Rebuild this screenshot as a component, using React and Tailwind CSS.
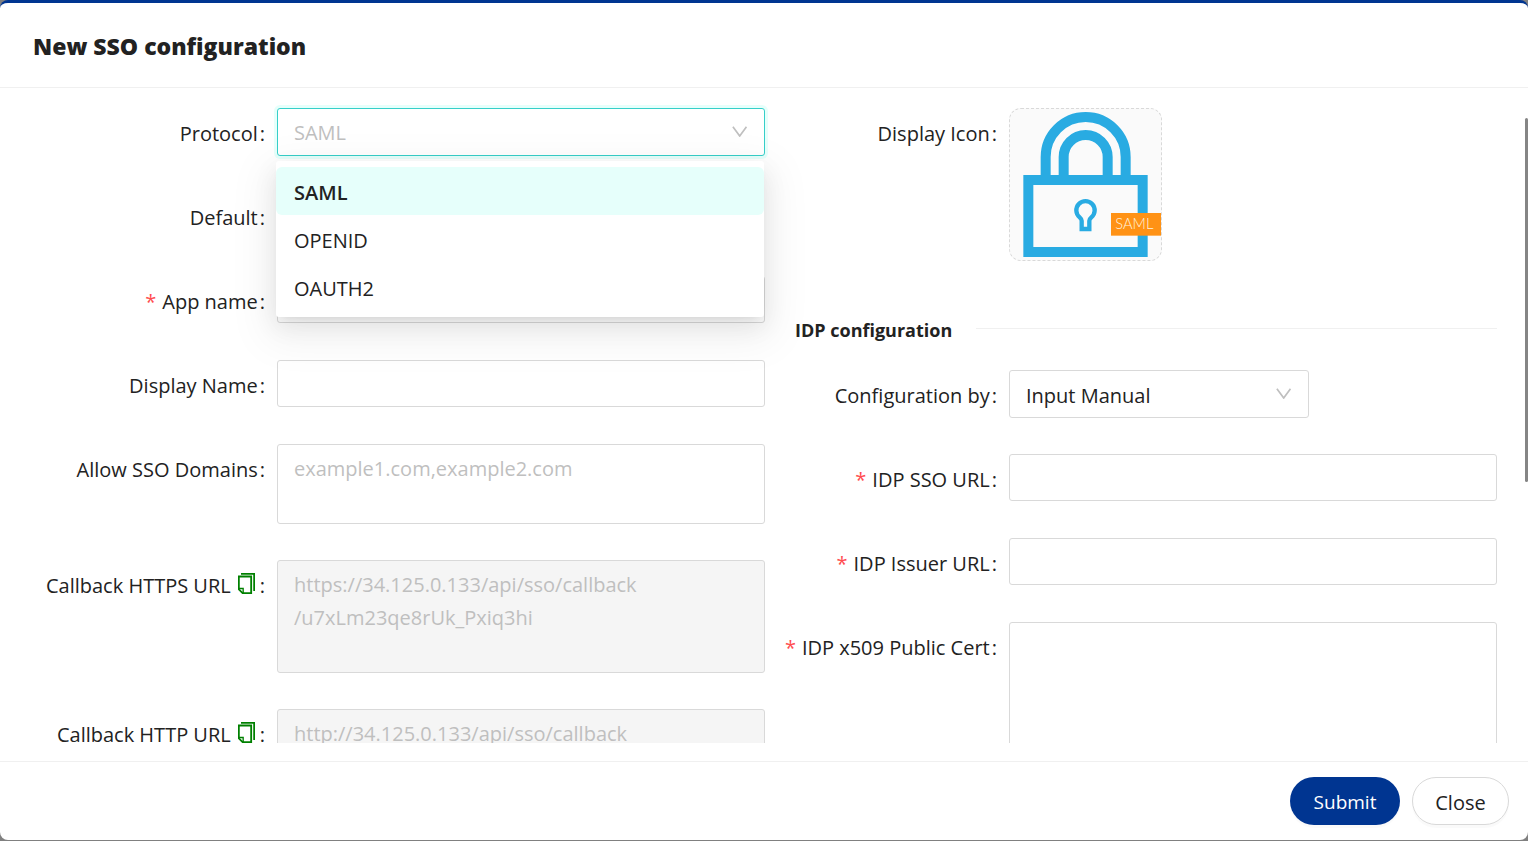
import React from "react";

const control =
  "block w-full rounded-[3px] border border-[#d9d9d9] bg-white px-4 text-[20px] text-[#222] placeholder:text-[#bfbfbf]";

function Chevron() {
  return (
    <svg
      className="pointer-events-none absolute top-[18px] right-[18px] h-[11px] w-[15px]"
      viewBox="0 0 15 11"
      fill="none"
      stroke="#bfbfbf"
      strokeWidth="1.7"
    >
      <path d="M0.9 0.8 L7.7 10 L14.5 0.8" />
    </svg>
  );
}

function CopyButton({ label }) {
  return (
    <button type="button" aria-label={label} className="ml-[7px] mb-1 cursor-pointer">
      <svg
        className="h-[21px] w-[17px]"
        viewBox="0 0 51 63"
        fill="none"
        stroke="#008000"
        strokeWidth="5.5"
      >
        <path d="M9 2.5 H48.5 V54" />
        <path d="M2.5 10.5 H39.5 V60.5 H14 L2.5 49 Z" />
        <path d="M2.5 46.5 H15.5 V60.5" strokeWidth="4" />
      </svg>
    </button>
  );
}

function Field({ id, label, required, copy, children }) {
  return (
    <div className="mb-9 flex min-h-12 items-start">
      <div className="flex h-12 w-1/3 shrink-0 items-center justify-end pt-[3px] pr-3 whitespace-nowrap">
        {required && <span className="mr-[6px] font-medium text-[#ff4d4f]">*</span>}
        <label htmlFor={id}>{label}</label>
        {copy && <CopyButton label={`Copy ${label}`} />}
        <span className={copy ? "ml-[5px]" : "ml-[2px]"}>:</span>
      </div>
      <div className="relative min-w-0 flex-1">{children}</div>
    </div>
  );
}

function LockIcon() {
  return (
    <svg viewBox="60 42 453 453" className="size-full" fill="none" stroke="#29abe2">
      <path d="M167 242 V186 A120 120 0 0 1 407 186 V242" strokeWidth="30" />
      <path d="M221 242 V186 A66 66 0 0 1 353 186 V242" strokeWidth="30" />
      <rect x="115" y="255" width="343" height="216" strokeWidth="30" />
      <path
        d="M275 402 V377 Q275 372 269 367 A27.5 27.5 0 1 1 304 367 Q298 372 298 377 V402 Z"
        strokeWidth="13"
      />
      <rect x="363" y="354" width="150" height="68" fill="#ff9215" stroke="none" />
      <text
        x="376"
        y="403"
        fill="#fff3df"
        stroke="none"
        fontSize="44"
        fontFamily="Lato, sans-serif"
        fontWeight="300"
      >
        SAML
      </text>
    </svg>
  );
}

export default function App() {
  return (
    <div className="h-screen bg-[#808080] pb-px font-['Open_Sans',sans-serif] text-[20px] leading-[33px] text-[#222]">
      <form className="relative flex h-full flex-col overflow-hidden rounded-lg border-t-3 border-[#003591] bg-white">
        <header className="flex h-[85px] shrink-0 items-center border-b border-[#f0f0f0] px-[33px]">
          <h1 className="pt-[3px] text-[23px] font-extrabold">New SSO configuration</h1>
        </header>

        <div className="mb-[18px] min-h-0 flex-1 overflow-hidden pt-5 pr-[31px] pl-[33px]">
          <div className="grid grid-cols-2">
            <div>
              <Field id="protocol" label="Protocol">
                <select
                  id="protocol"
                  defaultValue="SAML"
                  className="block h-12 w-full appearance-none rounded-[3px] border border-[#36cfc9] bg-white px-4 text-[20px] text-[#bfbfbf] shadow-[0_0_0_3px_#e6fffb] outline-none"
                >
                  <option>SAML</option>
                  <option>OPENID</option>
                  <option>OAUTH2</option>
                </select>
                <Chevron />
                <ul
                  role="listbox"
                  aria-label="Protocol"
                  className="absolute top-[53px] right-px -left-px z-10 rounded-[3px] bg-white py-[6px] shadow-[0_4px_9px_-6px_rgba(0,0,0,0.12),0_9px_24px_0_rgba(0,0,0,0.08),0_14px_42px_12px_rgba(0,0,0,0.05)]"
                >
                  <li role="option" aria-selected="true" className="flex h-12 items-center rounded-md bg-[#e6fffb] px-[18px] pt-[2px] font-semibold">
                    SAML
                  </li>
                  <li role="option" aria-selected="false" className="flex h-12 items-center px-[18px] pt-[2px]">
                    OPENID
                  </li>
                  <li role="option" aria-selected="false" className="flex h-12 items-center px-[18px] pt-[2px]">
                    OAUTH2
                  </li>
                </ul>
              </Field>
              <Field id="default" label="Default">
                <input id="default" type="checkbox" className="mt-4 size-4" />
              </Field>
              <Field id="appName" label="App name" required>
                <input id="appName" type="text" className={`${control} h-[47px]`} />
              </Field>
              <Field id="displayName" label="Display Name">
                <input id="displayName" type="text" className={`${control} h-[47px]`} />
              </Field>
              <Field id="domains" label="Allow SSO Domains">
                <textarea
                  id="domains"
                  placeholder="example1.com,example2.com"
                  className={`${control} h-20 resize-none py-[7px]`}
                />
              </Field>
              <Field id="callbackHttps" label="Callback HTTPS URL" copy>
                <textarea
                  id="callbackHttps"
                  disabled
                  defaultValue={"https://34.125.0.133/api/sso/callback\n/u7xLm23qe8rUk_Pxiq3hi"}
                  className="block h-[113px] w-full resize-none rounded-[3px] border border-[#d9d9d9] bg-[#f5f5f5] px-4 py-[7px] text-[20px] text-[#bfbfbf]"
                />
              </Field>
              <Field id="callbackHttp" label="Callback HTTP URL" copy>
                <textarea
                  id="callbackHttp"
                  disabled
                  defaultValue={"http://34.125.0.133/api/sso/callback\n/u7xLm23qe8rUk_Pxiq3hi"}
                  className="block h-[113px] w-full resize-none rounded-[3px] border border-[#d9d9d9] bg-[#f5f5f5] px-4 py-[7px] text-[20px] text-[#bfbfbf]"
                />
              </Field>
            </div>

            <div>
              <Field id="displayIcon" label="Display Icon">
                <button
                  id="displayIcon"
                  type="button"
                  className="block size-[153px] overflow-hidden rounded-xl border border-dashed border-[#d9d9d9] bg-[#fafafa]"
                >
                  <LockIcon />
                </button>
              </Field>

              <div className="mt-[49px] mb-[23px] flex items-center gap-6 pl-[30px]">
                <h2 className="pt-1 text-[18px] font-bold">IDP configuration</h2>
                <hr className="flex-1 border-[#f0f0f0]" />
              </div>

              <Field id="configBy" label="Configuration by">
                <div className="relative w-[300px]">
                  <select id="configBy" className={`${control} h-12 appearance-none pt-[2px]`}>
                    <option>Input Manual</option>
                  </select>
                  <Chevron />
                </div>
              </Field>
              <Field id="ssoUrl" label="IDP SSO URL" required>
                <input id="ssoUrl" type="text" className={`${control} h-[47px]`} />
              </Field>
              <Field id="issuerUrl" label="IDP Issuer URL" required>
                <input id="issuerUrl" type="text" className={`${control} h-[47px]`} />
              </Field>
              <Field id="cert" label="IDP x509 Public Cert" required>
                <textarea id="cert" className={`${control} h-[180px] resize-none py-[7px]`} />
              </Field>
            </div>
          </div>
        </div>

        {/* Scroll thumb */}
        <div className="absolute top-[115px] right-0 h-[364px] w-[3px] rounded-full bg-[#858585]" />

        <footer className="flex shrink-0 justify-end gap-3 border-t border-[#f0f0f0] py-[15px] pr-[19px]">
          <button
            type="submit"
            className="h-12 w-[110px] rounded-full bg-[#003591] pt-[3px] text-[19px] text-white shadow-[0_3px_0_rgba(0,0,0,0.02)]"
          >
            Submit
          </button>
          <button
            type="button"
            className="h-12 w-[97px] rounded-full border border-[#d9d9d9] bg-white pt-[3px] text-[20px] shadow-[0_3px_0_rgba(0,0,0,0.02)]"
          >
            Close
          </button>
        </footer>
      </form>
    </div>
  );
}
